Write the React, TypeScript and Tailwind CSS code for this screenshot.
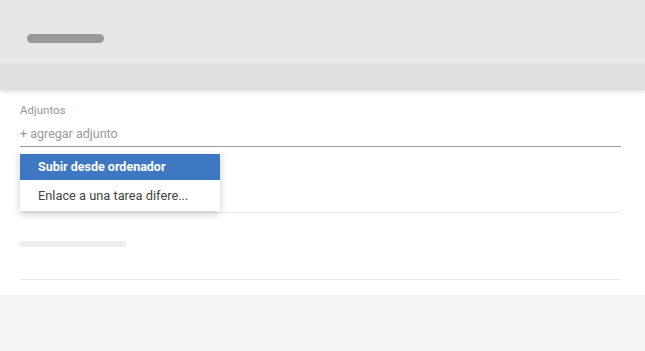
import React from "react";

export default function App() {
  return (
    <div className="w-[645px] h-[351px] bg-[#f4f4f4] overflow-hidden" style={{ fontFamily: 'Roboto, "Liberation Sans", Arial, sans-serif' }}>
      <div className="h-[64px] bg-[#e7e7e7] flex items-center pl-[27px]">
        <div className="w-[77px] h-[9px] rounded-full bg-[#999999] mt-[13px]" />
      </div>
      <div className="h-[26px] bg-[#e0e0e0] relative z-10 shadow-[0_2px_4px_rgba(0,0,0,0.12)]" />
      <div className="h-[205px] bg-white pl-[20px] pr-[24px] pt-[13px] relative">
        <div className="text-[11.5px] leading-[14px] text-[#999999]">Adjuntos</div>
        <div className="mt-[9px] text-[12.5px] leading-[15px] text-[#999999] pb-[5px] border-b border-[#9a9a9a]">+ agregar adjunto</div>
        <div className="h-[66px] border-b border-[#ebebeb]" />
        <div className="pt-[28px] h-[67px] border-b border-[#ebebeb]">
          <div className="w-[107px] h-[6px] rounded-full bg-[#eeeeee] -ml-[1px]" />
        </div>
        <div className="absolute left-[20px] top-[64px] w-[200px] bg-white shadow-[0_3px_8px_rgba(0,0,0,0.2)] z-20">
          <div className="h-[26px] bg-[#3e78c2] flex items-center pl-[18px] text-[12.5px] font-bold text-white">Subir desde ordenador</div>
          <div className="h-[31px] flex items-center pl-[18px] text-[12.8px] text-[#444444]">Enlace a una tarea difere...</div>
        </div>
      </div>
    </div>
  );
}
